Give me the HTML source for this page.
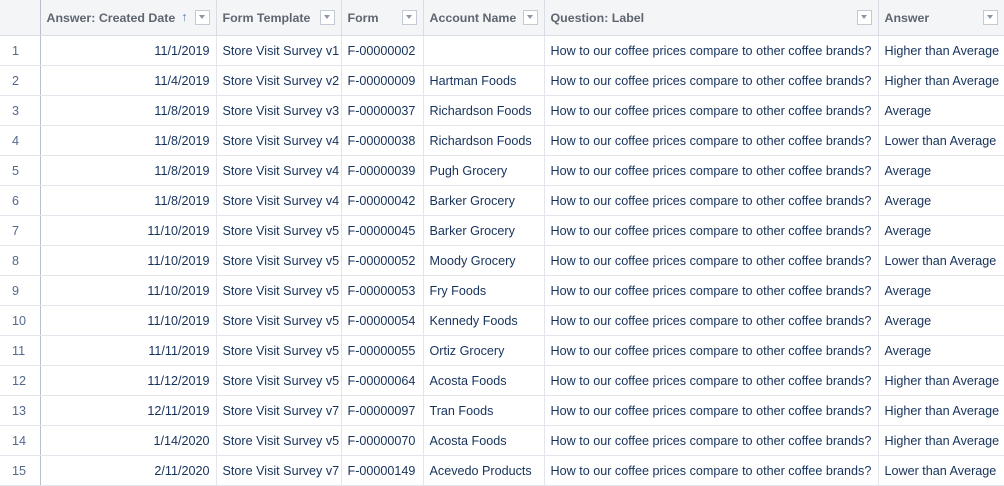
<!DOCTYPE html><html><head><style>
body{margin:0;width:1004px;height:486px;overflow:hidden;background:#fff;font-family:"Liberation Sans",sans-serif;font-size:12.6px;color:#16325c}
table{border-collapse:collapse;table-layout:fixed;width:1010px}
td,th{height:29px;border-right:1px solid #e2e6ec;border-bottom:1px solid #e2e6ec;padding:0 6px;white-space:nowrap;overflow:hidden}
th{height:35px;background:#f4f5f7;color:#5f6670;font-weight:bold;text-align:left;position:relative;border-bottom:1px solid #d8dde6;border-right:1px solid #d8dde6;font-size:12.4px}
td.n{color:#54698d;text-align:left;padding-left:12px;border-right:1px solid #b8c0cc}
th.n{border-right:1px solid #b8c0cc}
.r{text-align:right}
.dd{position:absolute;right:6px;top:10px;width:15px;height:15px;border:1px solid #c4cad3;background:#fff;box-sizing:border-box}
.dd:after{content:"";position:absolute;left:3px;top:4px;border-left:3.5px solid transparent;border-right:3.5px solid transparent;border-top:4px solid #8a97a8}
.ar{position:absolute;right:28px;top:10px;color:#5a7eb0;font-weight:normal}
</style></head><body>
<table>
<colgroup><col style="width:40px"><col style="width:176px"><col style="width:125px"><col style="width:82px"><col style="width:121px"><col style="width:334px"><col style="width:132px"></colgroup>
<tr><th class="n"></th><th>Answer: Created Date<span class="ar">↑</span><span class="dd"></span></th><th>Form Template<span class="dd"></span></th><th>Form<span class="dd"></span></th><th>Account Name<span class="dd"></span></th><th>Question: Label<span class="dd"></span></th><th>Answer<span class="dd" style="right:12px"></span></th></tr>
<tr><td class="n">1</td><td class="r">11/1/2019</td><td>Store Visit Survey v1</td><td>F-00000002</td><td></td><td>How to our coffee prices compare to other coffee brands?</td><td>Higher than Average</td></tr>
<tr><td class="n">2</td><td class="r">11/4/2019</td><td>Store Visit Survey v2</td><td>F-00000009</td><td>Hartman Foods</td><td>How to our coffee prices compare to other coffee brands?</td><td>Higher than Average</td></tr>
<tr><td class="n">3</td><td class="r">11/8/2019</td><td>Store Visit Survey v3</td><td>F-00000037</td><td>Richardson Foods</td><td>How to our coffee prices compare to other coffee brands?</td><td>Average</td></tr>
<tr><td class="n">4</td><td class="r">11/8/2019</td><td>Store Visit Survey v4</td><td>F-00000038</td><td>Richardson Foods</td><td>How to our coffee prices compare to other coffee brands?</td><td>Lower than Average</td></tr>
<tr><td class="n">5</td><td class="r">11/8/2019</td><td>Store Visit Survey v4</td><td>F-00000039</td><td>Pugh Grocery</td><td>How to our coffee prices compare to other coffee brands?</td><td>Average</td></tr>
<tr><td class="n">6</td><td class="r">11/8/2019</td><td>Store Visit Survey v4</td><td>F-00000042</td><td>Barker Grocery</td><td>How to our coffee prices compare to other coffee brands?</td><td>Average</td></tr>
<tr><td class="n">7</td><td class="r">11/10/2019</td><td>Store Visit Survey v5</td><td>F-00000045</td><td>Barker Grocery</td><td>How to our coffee prices compare to other coffee brands?</td><td>Average</td></tr>
<tr><td class="n">8</td><td class="r">11/10/2019</td><td>Store Visit Survey v5</td><td>F-00000052</td><td>Moody Grocery</td><td>How to our coffee prices compare to other coffee brands?</td><td>Lower than Average</td></tr>
<tr><td class="n">9</td><td class="r">11/10/2019</td><td>Store Visit Survey v5</td><td>F-00000053</td><td>Fry Foods</td><td>How to our coffee prices compare to other coffee brands?</td><td>Average</td></tr>
<tr><td class="n">10</td><td class="r">11/10/2019</td><td>Store Visit Survey v5</td><td>F-00000054</td><td>Kennedy Foods</td><td>How to our coffee prices compare to other coffee brands?</td><td>Average</td></tr>
<tr><td class="n">11</td><td class="r">11/11/2019</td><td>Store Visit Survey v5</td><td>F-00000055</td><td>Ortiz Grocery</td><td>How to our coffee prices compare to other coffee brands?</td><td>Average</td></tr>
<tr><td class="n">12</td><td class="r">11/12/2019</td><td>Store Visit Survey v5</td><td>F-00000064</td><td>Acosta Foods</td><td>How to our coffee prices compare to other coffee brands?</td><td>Higher than Average</td></tr>
<tr><td class="n">13</td><td class="r">12/11/2019</td><td>Store Visit Survey v7</td><td>F-00000097</td><td>Tran Foods</td><td>How to our coffee prices compare to other coffee brands?</td><td>Higher than Average</td></tr>
<tr><td class="n">14</td><td class="r">1/14/2020</td><td>Store Visit Survey v5</td><td>F-00000070</td><td>Acosta Foods</td><td>How to our coffee prices compare to other coffee brands?</td><td>Higher than Average</td></tr>
<tr><td class="n">15</td><td class="r">2/11/2020</td><td>Store Visit Survey v7</td><td>F-00000149</td><td>Acevedo Products</td><td>How to our coffee prices compare to other coffee brands?</td><td>Lower than Average</td></tr>
</table>
</body></html>
